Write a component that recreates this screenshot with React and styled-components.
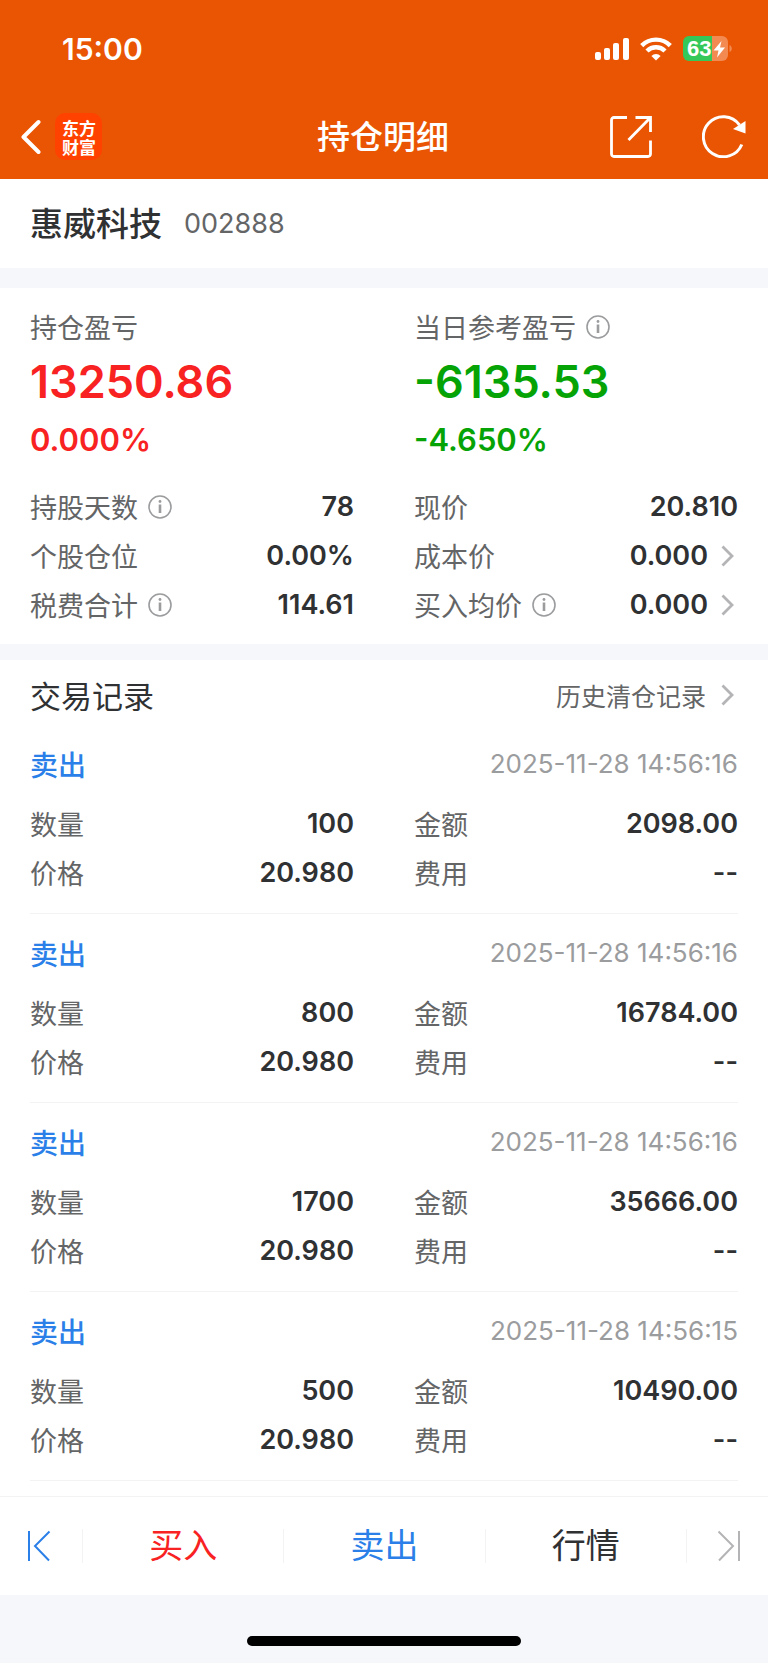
import React from "react";
import styled, { createGlobalStyle } from "styled-components";

const cjk = '"Noto Sans CJK SC", "Noto Sans", sans-serif';
const latin = 'Inter, "Noto Sans CJK SC", sans-serif';

const color = {
  brand: "#ea5504",
  ink: "#2f3133",
  label: "#646566",
  faint: "#9b9c9e",
  red: "#f82222",
  green: "#06a306",
  blue: "#2b7fe8",
  page: "#f6f7fa",
  line: "#f3f3f4",
};

const GlobalStyle = createGlobalStyle`
  * { box-sizing: border-box; }
  body { margin: 0; background: ${color.page}; font-family: ${cjk}; color: ${color.ink}; }
  h1, h2, h3, p, dl, dt, dd, ul { margin: 0; padding: 0; font-weight: inherit; }
  button { border: 0; padding: 0; background: none; font: inherit; color: inherit; cursor: pointer; }
  svg { display: block; flex: none; }
`;

const Header = styled.header`
  background: ${color.brand};
  color: #fff;
`;

const StatusBar = styled.div`
  display: flex;
  align-items: center;
  justify-content: space-between;
  height: 98px;
  padding: 0 36px 0 62px;
`;

const Clock = styled.time`
  font: 600 30px/40px ${latin};
`;

const StatusIcons = styled.div`
  display: flex;
  align-items: center;
  gap: 11px;
`;

const NavBar = styled.nav`
  display: grid;
  grid-template-columns: 1fr auto 1fr;
  align-items: center;
  height: 81px;
  padding: 0 22px 4px 20px;
`;

const NavSide = styled.div`
  display: flex;
  align-items: center;
  justify-content: ${(p) => (p.$end ? "flex-end" : "flex-start")};
  gap: ${(p) => (p.$end ? "50px" : "14px")};
`;

const NavTitle = styled.h1`
  font: 500 33px/48px ${cjk};
  padding-bottom: 3px;
`;

const Logo = styled.a`
  display: flex;
  align-items: center;
  width: 47px;
  height: 47px;
  padding: 0 6px 0 7px;
  border-radius: 10px;
  background: #ff4200;
  color: #fff;
  font: 700 17px/19px ${cjk};
  text-decoration: none;
`;

const StockBar = styled.section`
  display: flex;
  align-items: center;
  gap: 22px;
  height: 89px;
  padding: 0 30px 4px;
  background: #fff;
`;

const StockName = styled.h2`
  font: 500 33px/48px ${cjk};
`;

const StockCode = styled.span`
  padding-top: 4px;
  font: 400 27px/40px ${latin};
  color: ${color.label};
`;

const Panel = styled.section`
  background: #fff;
  margin-top: ${(p) => p.$gap};
  padding: ${(p) => p.$pad};
`;

const Columns = styled.div`
  display: grid;
  grid-template-columns: 1fr 1fr;
  column-gap: 60px;
`;

const Profit = styled.div`
  color: ${(p) => color[p.$tone]};
  margin-bottom: 22px;
`;

const Label = styled.span`
  display: flex;
  align-items: center;
  gap: 10px;
  font: 400 27px/40px ${cjk};
  color: ${color.label};
`;

const Amount = styled.p`
  margin-top: 7px;
  font: 600 45px/56px ${latin};
`;

const Percent = styled.p`
  margin-top: 10px;
  font: 600 31px/40px ${latin};
`;

const Stat = styled.div`
  display: flex;
  align-items: center;
  justify-content: space-between;
  height: 49px;
`;

const Value = styled.span`
  font: 600 27px/40px ${latin};
  color: ${color.ink};
`;

const ValueButton = styled.button`
  display: flex;
  align-items: center;
  gap: 13px;
  padding-right: 4px;
`;

const InfoButton = styled.button`
  color: ${color.faint};
`;

const TradesHead = styled.div`
  display: flex;
  align-items: center;
  justify-content: space-between;
  height: 65px;
  padding-top: 5px;
`;

const TradesTitle = styled.h2`
  font: 400 31px/44px ${cjk};
`;

const HistoryLink = styled.a`
  display: flex;
  align-items: center;
  gap: 15px;
  padding-right: 4px;
  font: 400 25px/40px ${cjk};
  color: ${color.label};
  text-decoration: none;
`;

const Records = styled.ul`
  list-style: none;
`;

const Record = styled.li`
  padding-bottom: 16px;
  border-bottom: 1px solid ${color.line};
`;

const RecordHead = styled.div`
  display: flex;
  align-items: center;
  justify-content: space-between;
  height: 74px;
  padding-top: 3px;
`;

const Side = styled.h3`
  font: 500 28px/40px ${cjk};
  color: ${color.blue};
`;

const Stamp = styled.time`
  font: 400 26px/40px ${latin};
  color: ${color.faint};
`;

const ActionBar = styled.nav`
  display: grid;
  grid-template-columns: 82px 1fr 1fr 1fr 82px;
  align-items: center;
  height: 99px;
  border-top: 1px solid ${color.line};
  background: #fff;
`;

const Action = styled.button`
  display: grid;
  place-items: center;
  height: 34px;
  padding-bottom: 4px;
  border-left: 1px solid ${color.line};
  color: ${(p) => p.$color};
  font: 400 34px/30px ${cjk};
`;

const EdgeAction = styled(Action)`
  padding: ${(p) => (p.$first ? "0 5px 0 0" : "0 0 0 4px")};
  border-left-width: ${(p) => (p.$first ? "0" : "1px")};
`;

const HomeArea = styled.footer`
  display: flex;
  justify-content: center;
  height: 68px;
  padding-top: 41px;
  background: ${color.page};
`;

const HomeIndicator = styled.div`
  width: 274px;
  height: 10px;
  border-radius: 5px;
  background: #000;
`;

const SignalIcon = () => (
  <svg width="34" height="24" viewBox="0 0 34 24" fill="#fff" aria-label="信号">
    <rect x="0" y="15" width="6" height="8" rx="2" />
    <rect x="9" y="11" width="6" height="12" rx="2" />
    <rect x="18" y="6" width="6" height="17" rx="2" />
    <rect x="28" y="1" width="6" height="22" rx="2" />
  </svg>
);

const WifiIcon = () => (
  <svg width="32" height="24" viewBox="0 0 32 24" aria-label="Wi-Fi">
    <g fill="none" stroke="#fff" strokeWidth="4.4">
      <path d="M1.7 8.6a20.2 20.2 0 0 1 28.6 0" />
      <path d="M7 14a12.7 12.7 0 0 1 18 0" />
    </g>
    <path d="M16 23.5l-4.6-4.6a6.5 6.5 0 0 1 9.2 0z" fill="#fff" />
  </svg>
);

const BatteryIcon = () => (
  <svg width="49" height="26" viewBox="0 0 49 26" aria-label="电量">
    <path d="M28 0h11a6 6 0 0 1 6 6v13a6 6 0 0 1-6 6h-11z" fill="#f28a52" />
    <path d="M6 0h23v25H6a6 6 0 0 1-6-6V6a6 6 0 0 1 6-6z" fill="#34c759" />
    <path d="M46.500 9c3 1 3 6 0 7z" fill="#f28a52" />
    <text x="4" y="20" fill="#fff" fontFamily="Liberation Sans, sans-serif" fontWeight="700" fontSize="22">63</text>
    <path d="M38.500 5L30.500 14.500h5L34 21.500l8-10h-5z" fill="#fff" />
  </svg>
);

const BackIcon = () => (
  <svg width="21" height="36" viewBox="0 0 21 36" fill="none" stroke="#fff" strokeWidth="4" strokeLinecap="round" strokeLinejoin="round">
    <path d="M18.500 3L3.500 18l15 15" />
  </svg>
);

const ShareIcon = () => (
  <svg width="42" height="42" viewBox="0 0 42 42" fill="none" stroke="#fff" strokeWidth="2.800">
    <path d="M17 1.500H4A2.500 2.500 0 0 0 1.500 4v34A2.500 2.500 0 0 0 4 40.500h34a2.500 2.500 0 0 0 2.500-2.500V24.500M25.500 1.500h15V16M40 2L18.500 24" />
  </svg>
);

const RefreshIcon = () => (
  <svg width="44" height="43" viewBox="0 0 44 43" aria-hidden="true">
    <path d="M39.800 29.500A20 20 0 1 1 37.500 10" fill="none" stroke="#fff" strokeWidth="3" />
    <path d="M43.500 6v12.500L31 14z" fill="#fff" />
  </svg>
);

const InfoIcon = () => (
  <svg width="24" height="24" viewBox="0 0 24 24" fill="none" stroke="currentColor">
    <circle cx="12" cy="12" r="11" strokeWidth="1.600" />
    <path d="M12 9.500V18" strokeWidth="2.600" />
    <circle cx="12" cy="6.500" r="1.400" fill="currentColor" stroke="none" />
  </svg>
);

const ChevronIcon = () => (
  <svg width="13" height="22" viewBox="0 0 13 22" fill="none" stroke="#b4b4b6" strokeWidth="2.800">
    <path d="M1.500 1.500L11 11l-9.500 9.500" />
  </svg>
);

const EdgeIcon = ({ next }) => (
  <svg width="24" height="32" viewBox="0 0 24 32" fill="none" stroke="currentColor" strokeWidth="2">
    <path d={next ? "M1.500 1.500L16 16L2 30.500M22 1v30" : "M22.500 1.500L8 16L22 30.500M2 1v30"} />
  </svg>
);

const Caption = ({ text, info }) => (
  <Label>
    {text}
    {info && (
      <InfoButton type="button" aria-label={`${text}说明`}>
        <InfoIcon />
      </InfoButton>
    )}
  </Label>
);

const StatItem = ({ label, value, info, more }) => (
  <Stat>
    <Caption text={label} info={info} />
    {more ? (
      <ValueButton type="button" aria-label={`${label} ${value}`}>
        <Value>{value}</Value>
        <ChevronIcon />
      </ValueButton>
    ) : (
      <Value>{value}</Value>
    )}
  </Stat>
);

const ProfitBlock = ({ label, info, tone, amount, percent }) => (
  <Profit $tone={tone}>
    <Caption text={label} info={info} />
    <Amount>{amount}</Amount>
    <Percent>{percent}</Percent>
  </Profit>
);

const stats = [
  { label: "持股天数", value: "78", info: true },
  { label: "现价", value: "20.810" },
  { label: "个股仓位", value: "0.00%" },
  { label: "成本价", value: "0.000", more: true },
  { label: "税费合计", value: "114.61", info: true },
  { label: "买入均价", value: "0.000", info: true, more: true },
];

const trades = [
  { time: "2025-11-28 14:56:16", count: "100", total: "2098.00" },
  { time: "2025-11-28 14:56:16", count: "800", total: "16784.00" },
  { time: "2025-11-28 14:56:16", count: "1700", total: "35666.00" },
  { time: "2025-11-28 14:56:15", count: "500", total: "10490.00" },
];

export default function App() {
  return (
    <>
      <GlobalStyle />
      <Header>
        <StatusBar>
          <Clock>15:00</Clock>
          <StatusIcons>
            <SignalIcon />
            <WifiIcon />
            <BatteryIcon />
          </StatusIcons>
        </StatusBar>
        <NavBar>
          <NavSide>
            <button type="button" aria-label="返回"><BackIcon /></button>
            <Logo href="#home">东方财富</Logo>
          </NavSide>
          <NavTitle>持仓明细</NavTitle>
          <NavSide $end>
            <button type="button" aria-label="分享"><ShareIcon /></button>
            <button type="button" aria-label="刷新"><RefreshIcon /></button>
          </NavSide>
        </NavBar>
      </Header>
      <main>
        <StockBar>
          <StockName>惠威科技</StockName>
          <StockCode>002888</StockCode>
        </StockBar>
        <Panel $gap="20px" $pad="19px 30px 15px">
          <Columns>
            <ProfitBlock label="持仓盈亏" tone="red" amount="13250.86" percent="0.000%" />
            <ProfitBlock label="当日参考盈亏" info tone="green" amount="-6135.53" percent="-4.650%" />
            {stats.map((s) => <StatItem key={s.label} {...s} />)}
          </Columns>
        </Panel>
        <Panel $gap="16px" $pad="0 30px 15px">
          <TradesHead>
            <TradesTitle>交易记录</TradesTitle>
            <HistoryLink href="#history">历史清仓记录<ChevronIcon /></HistoryLink>
          </TradesHead>
          <Records>
            {trades.map((t) => (
              <Record key={t.count}>
                <RecordHead>
                  <Side>卖出</Side>
                  <Stamp>{t.time}</Stamp>
                </RecordHead>
                <Columns>
                  <StatItem label="数量" value={t.count} />
                  <StatItem label="金额" value={t.total} />
                  <StatItem label="价格" value="20.980" />
                  <StatItem label="费用" value="--" />
                </Columns>
              </Record>
            ))}
          </Records>
        </Panel>
      </main>
      <ActionBar>
        <EdgeAction type="button" $first $color={color.blue} aria-label="上一个"><EdgeIcon /></EdgeAction>
        <Action type="button" $color={color.red}>买入</Action>
        <Action type="button" $color={color.blue}>卖出</Action>
        <Action type="button" $color={color.ink}>行情</Action>
        <EdgeAction type="button" $color="#b4b4b6" aria-label="下一个"><EdgeIcon next /></EdgeAction>
      </ActionBar>
      <HomeArea><HomeIndicator /></HomeArea>
    </>
  );
}
